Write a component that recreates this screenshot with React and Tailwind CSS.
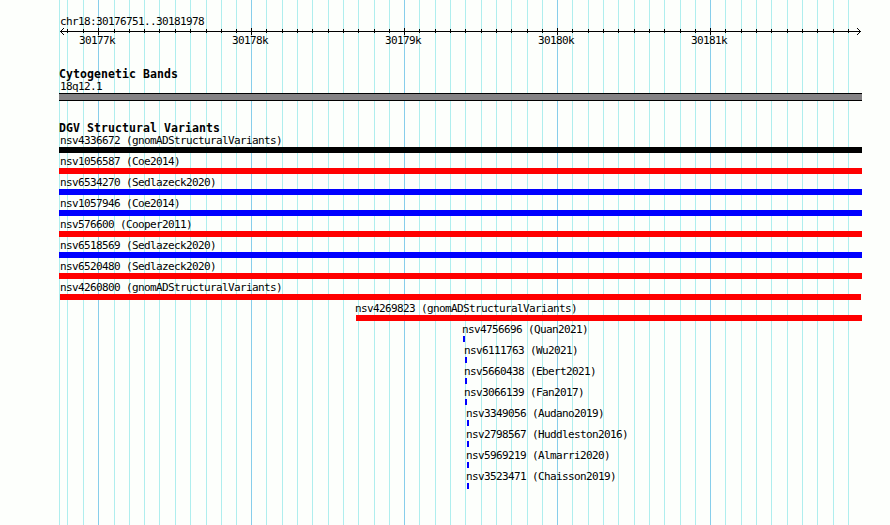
import React from 'react';

const MINOR = [
  67, 83, 114, 129, 144, 159, 175, 190, 206, 221, 236, 266, 282, 297, 312, 328, 343, 358, 374, 389,
  419, 435, 450, 465, 481, 496, 511, 527, 542, 572, 588, 603, 618, 634, 649, 664, 680, 695,
  725, 741, 756, 771, 787, 802, 817, 833, 848,
];
const MAJOR = [98, 251, 404, 557, 710];
const TICK_LABELS = ['30177k', '30178k', '30179k', '30180k', '30181k'];

const VARIANTS = [
  { name: 'nsv4336672 (gnomADStructuralVariants)', color: 'bg-black', text: 60, start: 59, end: 862 },
  { name: 'nsv1056587 (Coe2014)', color: 'bg-[#ff0000]', text: 60, start: 59, end: 862 },
  { name: 'nsv6534270 (Sedlazeck2020)', color: 'bg-[#0000ff]', text: 60, start: 59, end: 862 },
  { name: 'nsv1057946 (Coe2014)', color: 'bg-[#0000ff]', text: 60, start: 59, end: 862 },
  { name: 'nsv576600 (Cooper2011)', color: 'bg-[#ff0000]', text: 60, start: 59, end: 862 },
  { name: 'nsv6518569 (Sedlazeck2020)', color: 'bg-[#0000ff]', text: 60, start: 59, end: 862 },
  { name: 'nsv6520480 (Sedlazeck2020)', color: 'bg-[#ff0000]', text: 60, start: 59, end: 862 },
  { name: 'nsv4260800 (gnomADStructuralVariants)', color: 'bg-[#ff0000]', text: 60, start: 60, end: 861 },
  { name: 'nsv4269823 (gnomADStructuralVariants)', color: 'bg-[#ff0000]', text: 355, start: 356, end: 862 },
  { name: 'nsv4756696 (Quan2021)', color: 'bg-[#0000ff]', text: 462, start: 463, end: 465 },
  { name: 'nsv6111763 (Wu2021)', color: 'bg-[#0000ff]', text: 464, start: 465, end: 467 },
  { name: 'nsv5660438 (Ebert2021)', color: 'bg-[#0000ff]', text: 464, start: 465, end: 467 },
  { name: 'nsv3066139 (Fan2017)', color: 'bg-[#0000ff]', text: 464, start: 465, end: 467 },
  { name: 'nsv3349056 (Audano2019)', color: 'bg-[#0000ff]', text: 466, start: 467, end: 469 },
  { name: 'nsv2798567 (Huddleston2016)', color: 'bg-[#0000ff]', text: 466, start: 467, end: 469 },
  { name: 'nsv5969219 (Almarri2020)', color: 'bg-[#0000ff]', text: 466, start: 467, end: 469 },
  { name: 'nsv3523471 (Chaisson2019)', color: 'bg-[#0000ff]', text: 466, start: 467, end: 469 },
];

function Grid() {
  return (
    <svg className="absolute inset-0" width="890" height="525" shapeRendering="crispEdges">
      {[59, ...MINOR].map((x) => (
        <rect key={x} x={x} y="0" width="1" height="525" fill="#afeeee" />
      ))}
      {MAJOR.map((x) => (
        <rect key={x} x={x} y="0" width="1" height="525" fill="#87ceeb" />
      ))}
    </svg>
  );
}

function Axis() {
  return (
    <svg className="block" width="890" height="8" viewBox="0 27 890 8" shapeRendering="crispEdges">
      <rect x="60" y="31" width="801" height="1" />
      {MINOR.map((x) => (
        <rect key={x} x={x} y="29" width="1" height="4" />
      ))}
      {MAJOR.map((x) => (
        <rect key={x} x={x} y="28" width="1" height="7" />
      ))}
      {[1, 2, 3].map((d) => (
        <g key={d}>
          <rect x={60 + d} y={31 - d} width="1" height="1" />
          <rect x={60 + d} y={31 + d} width="1" height="1" />
          <rect x={860 - d} y={31 - d} width="1" height="1" />
          <rect x={860 - d} y={31 + d} width="1" height="1" />
        </g>
      ))}
    </svg>
  );
}

function Title({ children }) {
  return (
    <h2 className="ml-[59px] h-3 text-[11.5px] leading-3 font-bold tracking-[0.077px]">{children}</h2>
  );
}

function Variant({ item }) {
  return (
    <li className="h-[21px]">
      <div className="h-[15px] pt-[3px] leading-3" style={{ paddingLeft: item.text }}>
        {item.name}
      </div>
      <div
        className={`h-1.5 ${item.color}`}
        style={{ marginLeft: item.start, width: item.end - item.start }}
      />
    </li>
  );
}

export default function App() {
  return (
    <main className="relative h-[525px] w-[890px] overflow-hidden bg-[#fdfffc] font-['DejaVu_Sans_Mono',monospace] text-[11px] leading-3 tracking-[-0.622px] whitespace-nowrap text-black">
      <Grid />
      <div className="relative flex flex-col">
        <header className="pt-4">
          <div className="h-[11px] pl-[60px]">chr18:30176751..30181978</div>
          <Axis />
          <div className="flex h-3 gap-[117px] pl-[79px]">
            {TICK_LABELS.map((label) => (
              <span key={label} className="w-9">{label}</span>
            ))}
          </div>
        </header>
        <section className="pt-[21px]">
          <Title>Cytogenetic Bands</Title>
          <div className="mt-[1px] h-3 pl-[60px]">18q12.1</div>
          <div className="ml-[59px] h-2 w-[803px] border-y border-black bg-[#848284]" />
        </section>
        <section className="pt-[21px]">
          <Title>DGV Structural Variants</Title>
          <ul className="-mt-[2px]">
            {VARIANTS.map((item) => (
              <Variant key={item.name} item={item} />
            ))}
          </ul>
        </section>
      </div>
    </main>
  );
}
